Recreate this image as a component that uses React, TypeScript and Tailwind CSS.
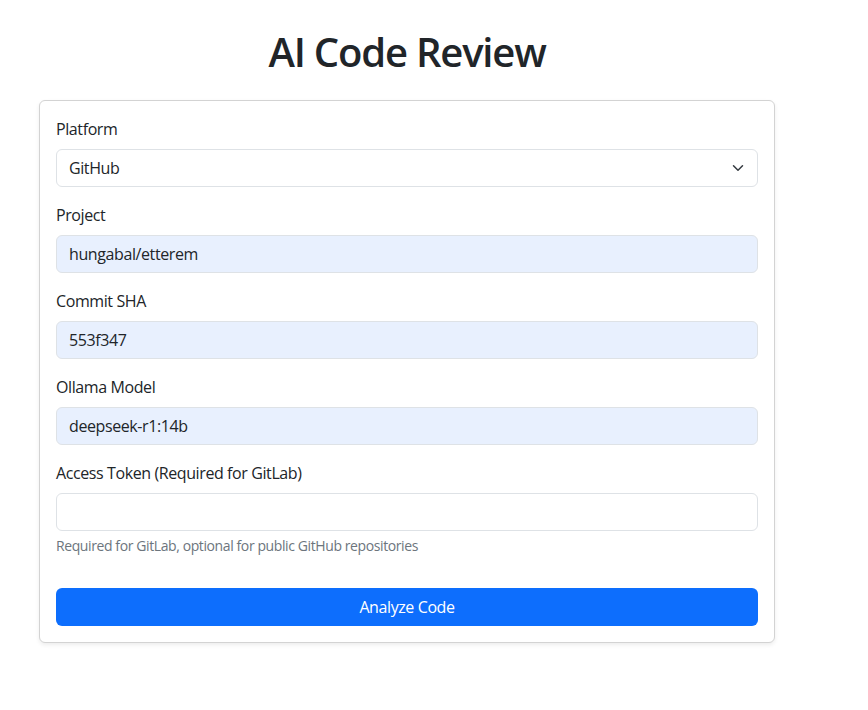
const fieldClass =
  'block w-full h-[38px] rounded-[6px] border border-[#dee2e6] px-3 text-base text-[#212529] outline-none';

function Field({ label, value }: { label: string; value?: string }) {
  return (
    <div className="mb-4">
      <label className="block mb-2 leading-6">{label}</label>
      <input
        type="text"
        defaultValue={value}
        className={`${fieldClass} ${value ? 'bg-[#e8f0fe]' : 'bg-white'}`}
      />
    </div>
  );
}

export default function App() {
  return (
    <div
      className="min-h-screen bg-white text-[#212529] pt-[28px] tracking-[-0.025em]"
      style={{ fontFamily: '"Segoe UI", "Open Sans", "Noto Sans", sans-serif' }}
    >
      <div className="ml-[39px] w-[736px]">
        <h1 className="text-[40px] leading-[48px] font-semibold text-center mb-6 tracking-[-0.03em]">
          AI Code Review
        </h1>

        <div className="rounded-[6px] border border-[#d3d3d3] bg-white p-4 shadow-[0_2px_4px_rgba(0,0,0,0.075)]">
          <div className="mb-4">
            <label className="block mb-2 leading-6">Platform</label>
            <div className="relative">
              <select className={`${fieldClass} bg-white appearance-none pr-9 tracking-[-0.025em]`} defaultValue="github">
                <option value="github">GitHub</option>
                <option value="gitlab">GitLab</option>
              </select>
              <svg
                className="absolute right-3 top-[13px] pointer-events-none"
                width="16"
                height="12"
                viewBox="0 0 16 16"
                fill="none"
                stroke="#343a40"
                strokeWidth="2"
                strokeLinecap="round"
                strokeLinejoin="round"
              >
                <path d="m2 5 6 6 6-6" />
              </svg>
            </div>
          </div>

          <Field label="Project" value="hungabal/etterem" />
          <Field label="Commit SHA" value="553f347" />
          <Field label="Ollama Model" value="deepseek-r1:14b" />

          <div className="mb-8">
            <label className="block mb-2 leading-6">Access Token (Required for GitLab)</label>
            <input type="password" className={`${fieldClass} bg-white`} />
            <div className="mt-1 text-sm leading-[21px] text-[#6c757d]">
              Required for GitLab, optional for public GitHub repositories
            </div>
          </div>

          <button className="block w-full h-[38px] rounded-[6px] bg-[#0d6efd] text-white text-base">
            Analyze Code
          </button>
        </div>
      </div>
    </div>
  );
}
